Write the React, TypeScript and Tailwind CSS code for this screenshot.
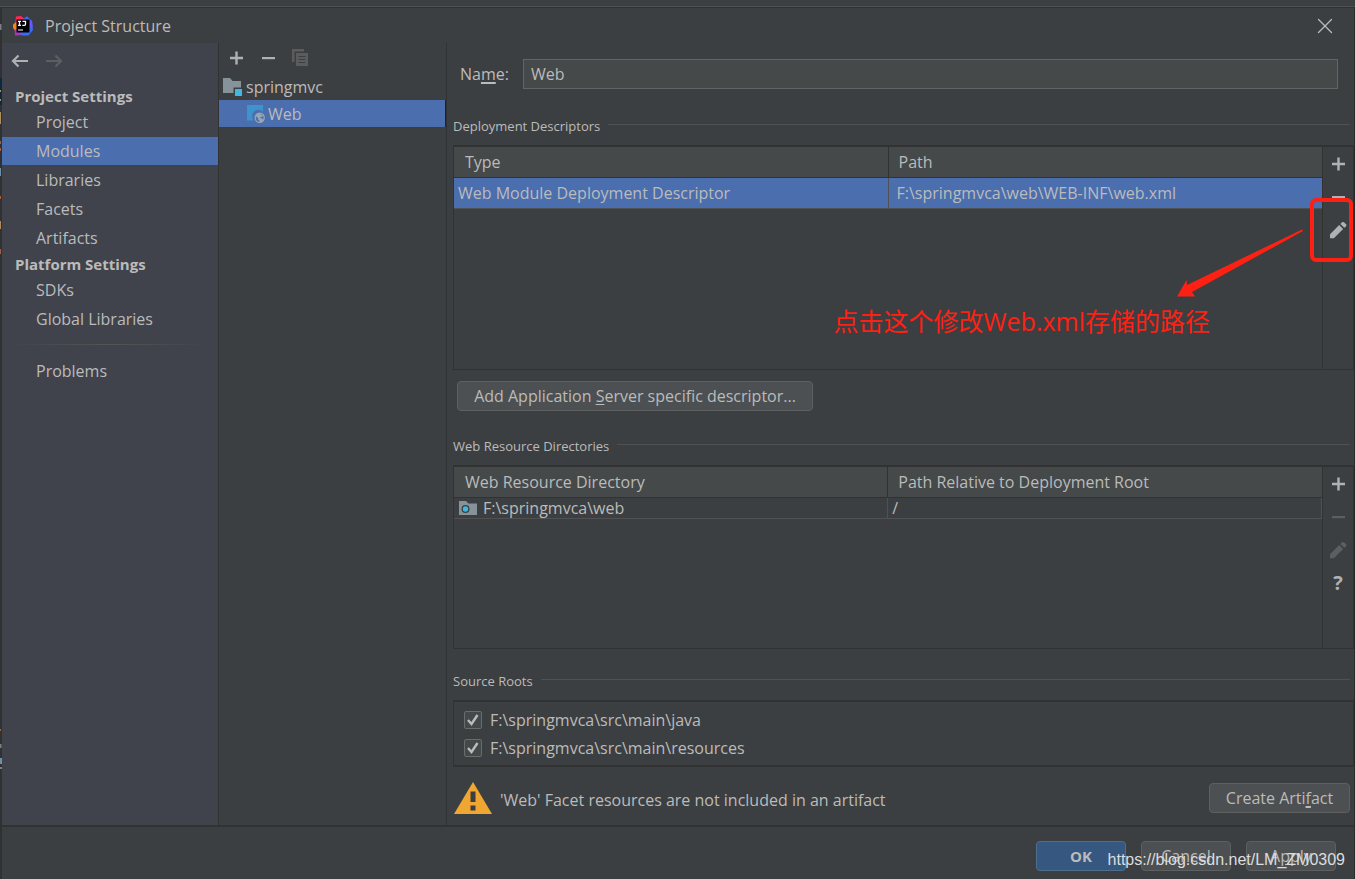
import { ReactNode } from 'react';
import { X } from 'lucide-react';

const projectItems = ['Project', 'Modules', 'Libraries', 'Facets', 'Artifacts'];
const platformItems = ['SDKs', 'Global Libraries'];
const sourceRoots = ['F:\\springmvca\\src\\main\\java', 'F:\\springmvca\\src\\main\\resources'];

function Logo() {
    return (
        <svg viewBox="0 0 20 20" className="h-5 w-5 shrink-0">
            <path d="M3 0.5 8 0l4 3-2 9-8-3z" fill="#fe2857" />
            <path d="M0 8.500 3 6l2 7-3 1.500-2-2.500z" fill="#fc801d" />
            <path d="M1.500 14l5-1 4 6-8.500.5z" fill="#a23bb5" />
            <path d="M11 2.500 14 .3 19 5l1 9-4.500 5.500H9l-2-2z" fill="#3b6cf0" />
            <path d="M15.500 3.500 19 5l.6 6-3 1z" fill="#6b57ff" />
            <rect x="3.500" y="3.500" width="13" height="13" fill="#000" />
            <path d="M5 5.300h3M6.500 5.300v4M5 9.300h3M9.500 5.300h3v3q0 1-1 1H9.300" stroke="#fff" strokeWidth="1.300" fill="none" />
            <path d="M5 14h5" stroke="#fff" strokeWidth="1" />
        </svg>
    );
}

function ArrowIcon({ flip = false }: { flip?: boolean }) {
    return (
        <svg viewBox="0 0 18 14" className="h-3.5 w-[18px]">
            <path
                d={flip ? 'M1 7h15M10.500 1.500 16 7l-5.500 5.500' : 'M17 7H2M7.500 1.500 2 7l5.500 5.500'}
                fill="none"
                stroke="currentColor"
                strokeWidth="2.200"
            />
        </svg>
    );
}

function PlusIcon() {
    return (
        <svg viewBox="0 0 16 16" className="h-4 w-4 fill-[#afb1b3]">
            <path d="M7.300 1.500h2.400v5.300H15v2.400H9.700v5.300H7.300V9.200H2V6.800h5.300z" />
        </svg>
    );
}

function MinusIcon() {
    return (
        <svg viewBox="0 0 16 16" className="h-4 w-4 fill-current">
            <path d="M2 7h13v2.200H2z" />
        </svg>
    );
}

function PencilIcon() {
    return (
        <svg viewBox="0 0 18 18" className="h-[18px] w-[18px] fill-current">
            <path d="M1 13.300 10.200 4.100l3.900 3.900L4.900 17.200H1z" />
            <path d="M11.400 2.900 13 1.300q1-.8 2 0l2 2q.8 1 0 2L15.300 6.800z" />
        </svg>
    );
}

function CopyIcon() {
    return (
        <svg viewBox="0 0 16 17" className="h-[17px] w-4">
            <path d="M0 0h12v2.500H2.500V13H0z" fill="#5a5c5e" />
            <path d="M4 4h12v13H4z" fill="#5a5c5e" />
            <path d="M6.500 7.500h7M6.500 10.500h7M6.500 13.500h7" stroke="#3c3f41" />
        </svg>
    );
}

function ModuleFolderIcon() {
    return (
        <svg viewBox="0 0 19 18" className="h-[18px] w-[19px]">
            <path d="M0 0h7l2.500 3H18v6.500h-7.500V15H0z" fill="#87939a" />
            <path d="M12 11h7v7h-7z" fill="#40b6e0" />
        </svg>
    );
}

function WebFacetIcon() {
    return (
        <svg viewBox="0 0 18 18" className="h-[18px] w-[18px]">
            <path d="M0 0h16v6.800A6.300 6.300 0 0 0 6.800 15.500H0z" fill="#3d94cc" />
            <circle cx="12.700" cy="12.700" r="5.200" fill="#9aa7b0" />
            <path d="M9 11.200l2.300 2-.2 1.300 1.200 1v1.500q-3.500-.5-3.600-4.500zM12.500 8.700q2.500.2 3.500 2l-1 1.300h-1.500l-.5 1.200h2l1 1.300-.8 1.300 1.200-1.600.2-3z" fill="#4b6eaf" />
        </svg>
    );
}

function WebFolderIcon() {
    return (
        <svg viewBox="0 0 18 14" className="h-3.5 w-[18px]">
            <path d="M0 0h7l2.500 2.500H18V14H0z" fill="#87939a" />
            <circle cx="6.500" cy="8" r="4" fill="#3c3f41" />
            <circle cx="6.500" cy="8" r="2.700" fill="#40b6e0" />
        </svg>
    );
}

function WarningIcon() {
    return (
        <svg viewBox="0 0 38 32" className="h-8 w-[38px]">
            <path d="M19 0 38 32H0z" fill="#f0a732" />
            <path d="M16.500 9.500h5V20h-5zM16.500 23.500h5v5h-5z" fill="#3c3f41" />
        </svg>
    );
}

// sliver of the editor that shows behind the dialog's left edge
function EditorEdge() {
    return (
        <svg viewBox="0 0 2 879" className="absolute top-0 left-0 h-[879px] w-0.5">
            <path d="M0 24h1.500v6H0zM0 744h1.500v4H0zM0 767h2v2H0z" fill="#7d8082" />
            <path d="M0 78h2v27H0z" fill="#0d293e" />
            <path d="M0 112h1v12H0zM0 221h1v8H0zM0 90h1v2H0zM0 99h1v2H0z" fill="#b08d5b" />
            <path d="M0 141h1v3H0zM0 148h1v3H0zM0 196h1v3H0zM0 249h1v5H0zM0 729h1v2H0z" fill="#a9603a" />
            <path d="M0 168h1v8H0zM0 758h2v6H0z" fill="#6e8fa8" />
        </svg>
    );
}

function NavItem({ label, active = false }: { label: string; active?: boolean }) {
    return (
        <li>
            <a href="#" className={active ? 'flex h-7 items-center bg-[#4b6eaf] pl-[34px]' : 'flex h-7 items-center pl-[34px]'}>
                {label}
            </a>
        </li>
    );
}

function SectionTitle({ children }: { children: ReactNode }) {
    return (
        <div className="flex h-5 items-center gap-2 pr-1">
            <h2 className="text-[13px]">{children}</h2>
            <div className="mb-1 h-px flex-1 bg-[#515151]" />
        </div>
    );
}

function ToolButton({ label, disabled = false, children }: { label: string; disabled?: boolean; children: ReactNode }) {
    return (
        <button
            type="button"
            aria-label={label}
            disabled={disabled}
            className="flex h-[33px] w-full items-center justify-center text-[#afb1b3] disabled:text-[#5c5e60]"
        >
            {children}
        </button>
    );
}

function PushButton({ className, children }: { className: string; children: ReactNode }) {
    return (
        <button type="button" className={`h-[30px] rounded-sm border border-[#5e6060] bg-[#4c5052] ${className}`}>
            {children}
        </button>
    );
}

export default function App() {
    return (
        <div className="relative flex min-h-screen flex-col bg-[#3c3f41] font-['Open_Sans','Noto_Sans_CJK_SC',sans-serif] text-base leading-5 text-[#bbbbbb]">
            <div className="h-2 border-b border-[#2f3132]">
                <div className="h-[7px] border-b border-[#515151]" />
            </div>
            <div className="relative flex flex-1 flex-col border-r border-l-2 border-r-[#2b2b2b] border-l-[#2f3132]">
                <header className="flex h-[35px] items-center justify-between pr-4 pl-[11px]">
                    <div className="flex items-center gap-3">
                        <Logo />
                        <h1>Project Structure</h1>
                    </div>
                    <button type="button" aria-label="Close">
                        <X size={26} strokeWidth={1.2} />
                    </button>
                </header>

                <div className="flex flex-1">
                    <nav className="w-[217px] shrink-0 border-r border-[#323232] bg-[#40434c]">
                        <div className="flex h-[41px] items-start gap-4 pt-[11px] pl-[9px]">
                            <button type="button" aria-label="Back" className="text-[#afb1b3]">
                                <ArrowIcon />
                            </button>
                            <button type="button" aria-label="Forward" disabled className="text-[#5c5e60]">
                                <ArrowIcon flip />
                            </button>
                        </div>
                        <h2 className="flex h-6 items-center pl-[13px] text-[15px] font-bold">Project Settings</h2>
                        <ul className="flex flex-col gap-px">
                            {projectItems.map((item) => (
                                <NavItem key={item} label={item} active={item === 'Modules'} />
                            ))}
                        </ul>
                        <h2 className="flex h-6 items-center pl-[13px] text-[15px] font-bold">Platform Settings</h2>
                        <ul className="flex flex-col gap-px">
                            {platformItems.map((item) => (
                                <NavItem key={item} label={item} />
                            ))}
                        </ul>
                        <div className="mx-2 mt-[11px] mb-3 h-px bg-gradient-to-r from-transparent via-[#555555] to-transparent" />
                        <ul>
                            <NavItem label="Problems" />
                        </ul>
                    </nav>

                    <div className="w-[228px] shrink-0 border-r border-[#323232]">
                        <div className="mb-0.5 flex h-[29px] items-center gap-4 pl-[9px]">
                            <button type="button" aria-label="Add">
                                <PlusIcon />
                            </button>
                            <button type="button" aria-label="Remove" className="text-[#afb1b3]">
                                <MinusIcon />
                            </button>
                            <button type="button" aria-label="Copy" disabled>
                                <CopyIcon />
                            </button>
                        </div>
                        <ul>
                            <li className="flex h-[26px] items-center gap-1 pl-1">
                                <ModuleFolderIcon />
                                springmvc
                            </li>
                            <li className="flex h-[27px] items-center gap-[3px] border-r border-[#0d293e] bg-[#4b6eaf] pl-7">
                                <WebFacetIcon />
                                Web
                            </li>
                        </ul>
                    </div>

                    <main className="flex min-w-0 flex-1 flex-col pl-1.5">
                        <div className="flex items-center pt-4 pr-4 pl-[7px]">
                            <label htmlFor="name" className="w-[63px]">
                                Na<span className="underline decoration-2 underline-offset-2">m</span>e:
                            </label>
                            <input
                                id="name"
                                type="text"
                                defaultValue="Web"
                                className="h-[30px] min-w-0 flex-1 border border-[#646464] bg-[#45494a] px-[7px] outline-none"
                            />
                        </div>

                        <div className="mt-[27px]">
                            <SectionTitle>Deployment Descriptors</SectionTitle>
                        </div>
                        <div className="relative mt-[9px] flex h-[225px] border border-t-2 border-[#323232]">
                            <div className="flex-1">
                                <table className="w-full table-fixed border-collapse text-left">
                                    <thead>
                                        <tr className="h-[30px] border-b border-[#323232] bg-[#45494a]">
                                            <th className="border-r border-[#323232] pl-[11px] font-normal">Type</th>
                                            <th className="pl-[10px] font-normal">Path</th>
                                        </tr>
                                    </thead>
                                    <tbody>
                                        <tr className="h-[31px] border-b border-[#515151] bg-[#4b6eaf]">
                                            <td className="border-r border-[#515151] pl-1">Web Module Deployment Descriptor</td>
                                            <td className="pl-2">F:\springmvca\web\WEB-INF\web.xml</td>
                                        </tr>
                                    </tbody>
                                </table>
                            </div>
                            <div className="w-[31px] border-l border-[#323232]">
                                <ToolButton label="Add descriptor">
                                    <PlusIcon />
                                </ToolButton>
                                <ToolButton label="Remove descriptor">
                                    <MinusIcon />
                                </ToolButton>
                                <ToolButton label="Edit descriptor">
                                    <PencilIcon />
                                </ToolButton>
                            </div>

                            <div className="absolute top-[51px] right-0 h-16 w-[43px] rounded-md border-4 border-[#ff2014]" />
                            <svg viewBox="0 0 126 68" className="absolute top-[82px] right-[50px] h-[68px] w-[126px] fill-[#ff2014]">
                                <path d="M125 .5 126 2 15 63l3 4.500H0L9.500 51l.5 5z" />
                            </svg>
                            <p className="absolute top-[158px] right-[143px] text-[25px] leading-8 whitespace-nowrap text-[#ff2014]">
                                点击这个修改Web.xml存储的路径
                            </p>
                        </div>

                        <PushButton className="mt-[11px] ml-1 w-[356px]">
                            Add Application <span className="underline underline-offset-2">S</span>erver specific descriptor...
                        </PushButton>

                        <div className="mt-[25px]">
                            <SectionTitle>Web Resource Directories</SectionTitle>
                        </div>
                        <div className="mt-[9px] flex h-[184px] border border-t-2 border-[#323232]">
                            <div className="flex-1">
                                <table className="w-full table-fixed border-collapse text-left">
                                    <thead>
                                        <tr className="h-[30px] border-b border-[#323232] bg-[#45494a]">
                                            <th className="border-r border-[#323232] pl-[11px] font-normal">Web Resource Directory</th>
                                            <th className="pl-[10px] font-normal">Path Relative to Deployment Root</th>
                                        </tr>
                                    </thead>
                                    <tbody>
                                        <tr className="h-[21px] border-r border-b border-[#515151]">
                                            <td className="border-r border-[#515151] pl-[5px]">
                                                <div className="flex items-center gap-1.5">
                                                    <WebFolderIcon />
                                                    F:\springmvca\web
                                                </div>
                                            </td>
                                            <td className="pl-1">/</td>
                                        </tr>
                                    </tbody>
                                </table>
                            </div>
                            <div className="w-[31px] border-l border-[#323232]">
                                <ToolButton label="Add directory">
                                    <PlusIcon />
                                </ToolButton>
                                <ToolButton label="Remove directory" disabled>
                                    <MinusIcon />
                                </ToolButton>
                                <ToolButton label="Edit directory" disabled>
                                    <PencilIcon />
                                </ToolButton>
                                <ToolButton label="Help">
                                    <span className="text-xl font-bold">?</span>
                                </ToolButton>
                            </div>
                        </div>

                        <div className="mt-[22px]">
                            <SectionTitle>Source Roots</SectionTitle>
                        </div>
                        <div className="mt-[9px] flex h-[67px] flex-col border border-y-2 border-[#323232] pt-1 pl-2.5">
                            {sourceRoots.map((root) => (
                                <label key={root} className="flex h-7 items-center gap-2">
                                    <span className="relative flex">
                                        <input
                                            type="checkbox"
                                            defaultChecked
                                            className="peer h-[18px] w-[18px] appearance-none rounded-xs border border-[#6b6b6b] bg-[#43494a]"
                                        />
                                        <svg
                                            viewBox="0 0 18 18"
                                            className="pointer-events-none invisible absolute inset-0 h-[18px] w-[18px] peer-checked:visible"
                                        >
                                            <path d="M4 9l3.500 4L13.500 4" fill="none" stroke="#bbbbbb" strokeWidth="2.400" />
                                        </svg>
                                    </span>
                                    {root}
                                </label>
                            ))}
                        </div>

                        <div className="flex items-center gap-2 pt-[15px] pr-1 pl-px">
                            <WarningIcon />
                            <p className="flex-1 pt-1">'Web' Facet resources are not included in an artifact</p>
                            <PushButton className="w-[141px]">
                                Create Arti<span className="underline decoration-2 underline-offset-2">f</span>act
                            </PushButton>
                        </div>
                    </main>
                </div>

                <footer className="relative flex h-[54px] justify-end gap-[15px] border-t-2 border-[#323232] pt-3.5 pr-[18px]">
                    <button type="button" className="h-[30px] w-[90px] rounded-sm border border-[#4c708c] bg-[#365880] text-[15px] font-bold">
                        OK
                    </button>
                    <PushButton className="w-[90px]">Cancel</PushButton>
                    <PushButton className="w-[90px]">
                        A<span className="underline underline-offset-2">p</span>ply
                    </PushButton>
                    <p className="absolute right-[9px] bottom-[9px] font-['Liberation_Sans',sans-serif] text-base leading-5 text-[#dddddd]">
                        https://blog.csdn.net/LM_ZM0309
                    </p>
                </footer>
            </div>
            <EditorEdge />
        </div>
    );
}
